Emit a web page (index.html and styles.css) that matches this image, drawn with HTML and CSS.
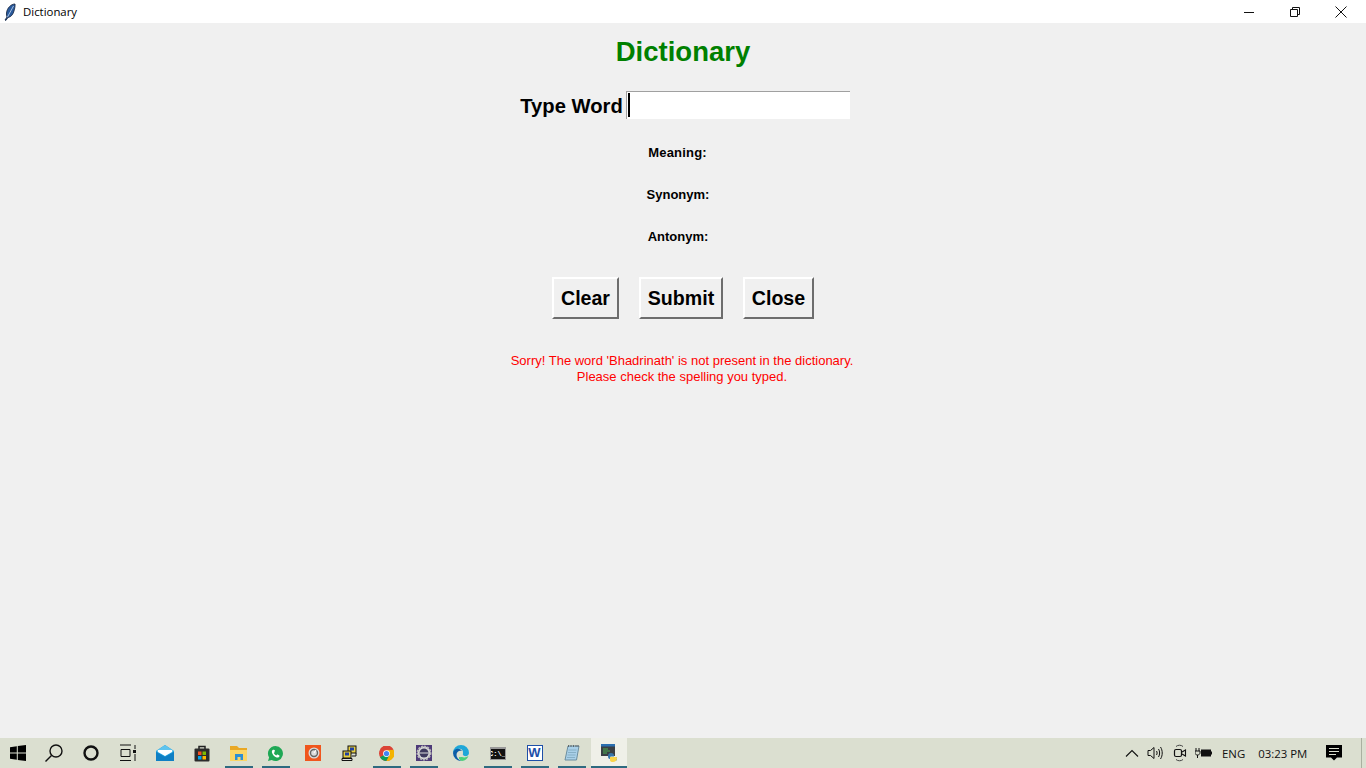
FILE: index.html
```html
<!DOCTYPE html>
<html lang="en">
<head>
<meta charset="utf-8">
<title>Dictionary</title>
<link rel="stylesheet" href="styles.css">
</head>
<body>
<header class="titlebar">
  <div class="title-left">
    <svg class="feather" width="14" height="18" viewBox="0 0 14 18"><path d="M12 1C8 1 4 5 3.500 10c-.2 1.500 0 3 .5 4L2 17l.8.5L5 14.500c3-.5 5-3 6-6.500.7-2.500 1.300-5 1-7z" fill="#2a5a9c" stroke="#10203a" stroke-width=".8"/><path d="M10.500 3 4.500 14" stroke="#c9dcf2" stroke-width=".8"/></svg>
    <span class="title-text">Dictionary</span>
  </div>
  <div class="win-controls">
    <span class="win-btn"><svg width="12" height="12" viewBox="0 0 12 12"><path d="M1 6.500h10" stroke="#111" fill="none"/></svg></span>
    <span class="win-btn"><svg width="12" height="12" viewBox="0 0 12 12"><path d="M1.500 3.500h7v7h-7zM3.500 3.500v-2h7v7h-2" stroke="#111" fill="none"/></svg></span>
    <span class="win-btn"><svg width="12" height="12" viewBox="0 0 12 12"><path d="M.5.500l11 11M11.500.500l-11 11" stroke="#111" fill="none"/></svg></span>
  </div>
</header>

<main class="app">
  <h1 class="heading">Dictionary</h1>
  <div class="word-row">
    <label class="word-label">Type Word</label>
    <div class="entry"><span class="caret"></span></div>
  </div>
  <div class="info-rows">
    <div class="info meaning">Meaning:</div>
    <div class="info synonym">Synonym:</div>
    <div class="info antonym">Antonym:</div>
  </div>
  <div class="buttons">
    <button class="btn btn-clear">Clear</button>
    <button class="btn btn-submit">Submit</button>
    <button class="btn btn-close">Close</button>
  </div>
  <p class="message">Sorry! The word 'Bhadrinath' is not present in the dictionary.<br>Please check the spelling you typed.</p>
</main>

<footer class="taskbar">
  <div class="apps">
    <span class="slot first"><svg width="18" height="18" viewBox="0 0 18 18"><path d="M1 3.200 7.800 2.200V8.500H1zM8.800 2.100 17 1V8.500H8.800zM1 9.500H7.800V15.800L1 14.800zM8.800 9.500H17V17L8.800 15.900z" fill="#000"/></svg></span>
    <span class="slot"><svg width="20" height="20" viewBox="0 0 20 20"><circle cx="12" cy="8" r="6" fill="none" stroke="#111" stroke-width="1.400"/><path d="M7.500 12.500 1.500 18.500" stroke="#111" stroke-width="1.500"/></svg></span>
    <span class="slot"><svg width="18" height="18" viewBox="0 0 18 18"><circle cx="9" cy="9" r="6.500" fill="none" stroke="#111" stroke-width="2.400"/></svg></span>
    <span class="slot"><svg width="18" height="18" viewBox="0 0 18 18"><path d="M1 1h11M2 5.500h9v7H2zM1 16.500h11M16 1v4M16 10v7" stroke="#111" fill="none"/><rect x="14" y="6" width="3" height="3" fill="#111"/></svg></span>
    <span class="slot"><svg width="18" height="16" viewBox="0 0 18 16"><path d="M0 6 9 0l9 6v10H0z" fill="#1c9ad8"/><path d="M0 6 9 0l9 6-9 5z" fill="#5fc4ee"/><path d="M2 5h14v2l-7 4-7-4z" fill="#fff"/><path d="M0 7l9 5 9-5v9H0z" fill="#0f7fc4"/></svg></span>
    <span class="slot"><svg width="16" height="18" viewBox="0 0 16 18"><path d="M5 5V2.500h6V5" fill="none" stroke="#222" stroke-width="1.500"/><rect x="0.500" y="4.500" width="15" height="13" rx="1" fill="#2c2c2c"/><rect x="4" y="7.500" width="3.500" height="3.500" fill="#f25022"/><rect x="8.500" y="7.500" width="3.500" height="3.500" fill="#7fba00"/><rect x="4" y="12" width="3.500" height="3.500" fill="#00a4ef"/><rect x="8.500" y="12" width="3.500" height="3.500" fill="#ffb900"/></svg></span>
    <span class="slot running"><svg width="17" height="16" viewBox="0 0 17 16"><path d="M0 1h7l2 2h8v13H0z" fill="#e9a825"/><path d="M0 5h17v11H0z" fill="#fbd667"/><path d="M5 9h8v6h-2.500v-3h-3v3H5z" fill="#2d8fd5"/></svg></span>
    <span class="slot running"><svg width="17" height="17" viewBox="0 0 17 17"><path d="M8.500 1a7.500 7.500 0 0 0-6.400 11.400L1 16l3.700-1A7.500 7.500 0 1 0 8.500 1z" fill="#1fa855"/><path d="M6 4.800c-.8.400-1.400 1.500-1 2.900.7 2.200 2.500 4 4.600 4.700 1.300.4 2.500-.2 2.900-1.100.2-.5 0-.9-.5-1.100l-1.400-.7c-.3-.1-.6 0-.8.300l-.5.600c-1.100-.5-2-1.400-2.500-2.500l.6-.5c.2-.2.300-.5.200-.8L7.900 5.300c-.2-.5-.9-.8-1.900-.5z" fill="#fff"/></svg></span>
    <span class="slot"><svg width="16" height="16" viewBox="0 0 16 16"><rect width="16" height="16" fill="#f0561d"/><circle cx="9" cy="8" r="5.500" fill="#ddd"/><circle cx="9" cy="8" r="3.500" fill="none" stroke="#666" stroke-width="1.400"/><path d="M11 5 9 8" stroke="#fff" stroke-width="1.200" fill="none"/></svg></span>
    <span class="slot"><svg width="17" height="17" viewBox="0 0 17 17"><rect x="7" y="1" width="8" height="7" fill="#e8d040" stroke="#111"/><rect x="9" y="2.500" width="4" height="3" fill="#2040a0"/><rect x="2" y="6" width="8" height="7" fill="#e8d040" stroke="#111"/><rect x="4" y="7.500" width="4" height="3" fill="#2040a0"/><path d="M1 15.500h10v-2H1z" fill="#ddd" stroke="#111"/><path d="M11 11h4v-3" stroke="#111" fill="none"/></svg></span>
    <span class="slot running"><svg width="15" height="15" viewBox="0 0 16 16"><circle cx="8" cy="8" r="8" fill="#db4437"/><path d="M8 8 1.100 12a8 8 0 0 0 6.900 4L12 8z" fill="#0f9d58"/><path d="M8 4h7.500A8 8 0 0 1 8 16l4-8z" fill="#f4b400"/><path d="M8 4h7.500A8 8 0 0 0 1 4z" fill="#db4437"/><circle cx="8" cy="8" r="3.600" fill="#fff"/><circle cx="8" cy="8" r="2.800" fill="#4285f4"/></svg></span>
    <span class="slot running"><svg width="16" height="16" viewBox="0 0 16 16"><rect width="16" height="16" fill="#4d3a78"/><circle cx="8" cy="8" r="6.500" fill="#ddd" stroke="#bbb" stroke-width="2" stroke-dasharray="2 1"/><circle cx="8" cy="8" r="4.500" fill="#3f3a5e"/><path d="M3.500 7.500h9v1h-9z" fill="#ddd"/></svg></span>
    <span class="slot"><svg width="16" height="16" viewBox="0 0 16 16"><path d="M8 0a8 8 0 0 1 8 8c0 2.500-2.200 3.500-4.500 3-1.500-.4-2-1.500-1.500-2.500C10.500 5 8 3 5 4 2 5 .2 8 0 8a8 8 0 0 1 8-8z" fill="#1fa7d8"/><path d="M0 8c.3-2.500 2.500-4.300 5-4.300 2 0 3.500 1 4 2.300-3-1-5.500 1-5.500 4 0 2.500 2 5 5 6A8 8 0 0 1 0 8z" fill="#0d5ea8"/><path d="M9 12c2 .7 4.500.5 6.500-1A8 8 0 0 1 9 16c-2-.5-3.500-2.200-3-4 .8.300 2 0 3 0z" fill="#4bd17a"/></svg></span>
    <span class="slot running"><span class="cmd"><span class="cmd-text">C:\_</span></span></span>
    <span class="slot running"><span class="word-icon">W</span></span>
    <span class="slot running"><svg width="16" height="18" viewBox="0 0 16 18"><path d="M4 2h11l-2.500 14H1z" fill="#a9d0e8" stroke="#6b8ea0"/><path d="M4.500 1v2M7 1v2M9.500 1v2M12 1v2M14 1v2" stroke="#555" stroke-width=".8"/><path d="M4.500 6h8M4 8.500h8M3.500 11h8M3 13.500h8" stroke="#7fa7bd" stroke-width=".8"/></svg></span>
    <span class="slot active"><svg width="16" height="18" viewBox="0 0 16 18"><rect y="0" width="14" height="12" fill="#3a3f44"/><rect width="14" height="2.500" fill="#2a6fb0"/><path d="M2 5h5M2 7h7M2 9h4" stroke="#4caf50" stroke-width="1"/><path d="M7 12c0-2 1-3 3-3s3 1 3 2.500v1H9.500v.5H15c1 0 1 1 1 2s-1 2-2 2h-1v-2H9c-1.500 0-2-1-2-3z" fill="#3776ab"/><path d="M9 13h6c1 0 1 1 1 1.500 0 2-2 3.500-4 3.500s-3-.5-3-2z" fill="#f9d44a"/></svg></span>
  </div>
  <div class="tray">
    <svg class="tray-icon caret-up" width="14" height="8" viewBox="0 0 14 8"><path d="M1 7.500 7 1.500l6 6" fill="none" stroke="#111" stroke-width="1.100"/></svg>
    <svg class="tray-icon speaker" width="18" height="16" viewBox="0 0 18 16"><path d="M1 5.500h2.500L7 2.500v11l-3.500-3H1z" fill="none" stroke="#111"/><path d="M9.500 6c.8 1.200.8 2.800 0 4M11.500 4c1.500 2.300 1.500 5.700 0 8M13.500 2c2.300 3.500 2.300 8.500 0 12" fill="none" stroke="#111"/></svg>
    <svg class="tray-icon meet" width="14" height="18" viewBox="0 0 14 18"><path d="M3 2.500C5 .8 8 .8 10 2.500M3 15.500c2 1.700 5 1.700 7 0" fill="none" stroke="#444"/><rect x="1.500" y="5.500" width="7" height="7" rx="1.500" fill="none" stroke="#111" stroke-width="1.200"/><path d="M9 8l3.500-2v6L9 10" fill="none" stroke="#111" stroke-width="1.100"/></svg>
    <svg class="tray-icon battery" width="17" height="12" viewBox="0 0 17 12"><path d="M1 1v3M4 1v3M0 4h5v2c0 1-1 2-2.500 2S0 7 0 6zM2.500 8v3" stroke="#111" fill="none"/><rect x="6" y="2.500" width="10" height="7" fill="#111"/><rect x="16" y="4.500" width="1" height="3" fill="#111"/></svg>
    <span class="tray-text lang">ENG</span>
    <span class="tray-text clock">03:23 PM</span>
    <svg class="tray-icon notify" width="16" height="16" viewBox="0 0 16 16"><path d="M0 0h16v12.500h-5L8 15.500 5 12.500H0z" fill="#000"/><path d="M3 3.500h10M3 6.500h10M3 9.500h7" stroke="#dbdfd0"/></svg>
    <span class="show-desktop"></span>
  </div>
</footer>
</body>
</html>
```
FILE: styles.css
```css
* { box-sizing: border-box; }
html, body { margin: 0; height: 100%; }
body {
  width: 1366px;
  height: 768px;
  overflow: hidden;
  display: flex;
  flex-direction: column;
  background: #f0f0f0;
  font-family: "Liberation Sans", Arial, sans-serif;
  color: #000;
}

/* Title bar */
.titlebar {
  height: 23px;
  flex: none;
  background: #fff;
  display: flex;
  align-items: center;
  justify-content: space-between;
}
.title-left { display: flex; align-items: center; padding-left: 3px; }
.feather { display: block; }
.title-text {
  margin-left: 6px;
  font: 11.400px "Open Sans", "Noto Sans", sans-serif;
  color: #000;
}
.win-controls { display: flex; padding-right: 2px; }
.win-btn {
  width: 46px;
  height: 23px;
  display: flex;
  align-items: center;
  justify-content: center;
}

/* Dictionary app */
.app {
  flex: 1;
  display: flex;
  flex-direction: column;
  align-items: center;
}
.heading {
  margin: 14px 0 0;
  font-size: 27.500px;
  line-height: 30px;
  height: 30px;
  font-weight: 700;
  color: #008000;
}
.word-row {
  margin: 24px 0 0 4px;
  height: 28px;
  display: flex;
  align-items: center;
}
.word-label {
  font-size: 20.200px;
  font-weight: 700;
  margin-right: 3px;
  position: relative;
  top: 1px;
}
.entry {
  width: 224px;
  height: 28px;
  background: #fff;
  border-top: 1px solid #a0a0a0;
  border-left: 1px solid #a0a0a0;
  padding: 1px 0 0 1px;
}
.caret { display: block; width: 2px; height: 24px; background: #000; }
.info-rows { margin-top: 13px; display: flex; flex-direction: column; align-items: center; }
.info {
  height: 42px;
  line-height: 42px;
  font-size: 13px;
  font-weight: 700;
  margin-left: -10px;
}
.meaning { letter-spacing: .2px; margin-left: -11px; }
.buttons { margin-top: 19px; display: flex; gap: 20px; }
.btn {
  height: 42px;
  padding: 0;
  font: 700 19.600px "Liberation Sans", Arial, sans-serif;
  color: #000;
  background: #f0f0f0;
  border: 2px solid;
  border-color: #fff #6d6d6d #6d6d6d #fff;
}
.btn-clear { width: 67px; }
.btn-submit { width: 84px; }
.btn-close { width: 71px; }
.message {
  margin: 34px 2px 0 0;
  font-size: 13px;
  line-height: 16px;
  text-align: center;
  color: #ff0000;
}

/* Taskbar */
.taskbar {
  height: 30px;
  flex: none;
  background: #dbdfd0;
  display: flex;
  justify-content: space-between;
}
.apps { display: flex; }
.slot {
  position: relative;
  width: 37px;
  height: 30px;
  display: flex;
  align-items: center;
  justify-content: center;
}
.slot.first { width: 35px; }
.slot.running::after {
  content: "";
  position: absolute;
  left: 5px;
  right: 4px;
  bottom: 0;
  height: 2px;
  background: #2e6a80;
}
.slot.active { background: #eff0e8; margin-left: 1px; width: 36px; }
.slot.active::after {
  content: "";
  position: absolute;
  left: 0;
  right: 0;
  bottom: 0;
  height: 2px;
  background: #2e6a80;
}
.cmd {
  width: 16px;
  height: 13px;
  background: #111;
  border: 1px solid #999;
  border-top-width: 2px;
  display: flex;
  align-items: center;
  justify-content: center;
  overflow: hidden;
}
.cmd-text {
  font: 700 7px "Liberation Mono", monospace;
  line-height: 8px;
  color: #fff;
}
.word-icon {
  width: 16px;
  height: 16px;
  background: #fff;
  border: 1.500px solid #1d4fa8;
  font: 700 13px "Liberation Sans", sans-serif;
  line-height: 13px;
  text-align: center;
  color: #1d4fa8;
}
.tray { display: flex; align-items: center; position: relative; width: 246px; }
.tray-icon { display: block; flex: none; }
.caret-up { margin-left: 5px; }
.speaker { margin-left: 8px; }
.meet { margin-left: 8px; }
.battery { margin-left: 8px; }
.tray-text {
  font: 11.400px "Open Sans", "Noto Sans", sans-serif;
  color: #111;
  white-space: nowrap;
}
.lang { margin-left: 10px; }
.clock { margin-left: 13px; }
.notify { margin-left: 19px; }
.show-desktop {
  position: absolute;
  right: 4px;
  top: 0;
  bottom: 0;
  width: 1px;
  background: #aab0a0;
}
```
